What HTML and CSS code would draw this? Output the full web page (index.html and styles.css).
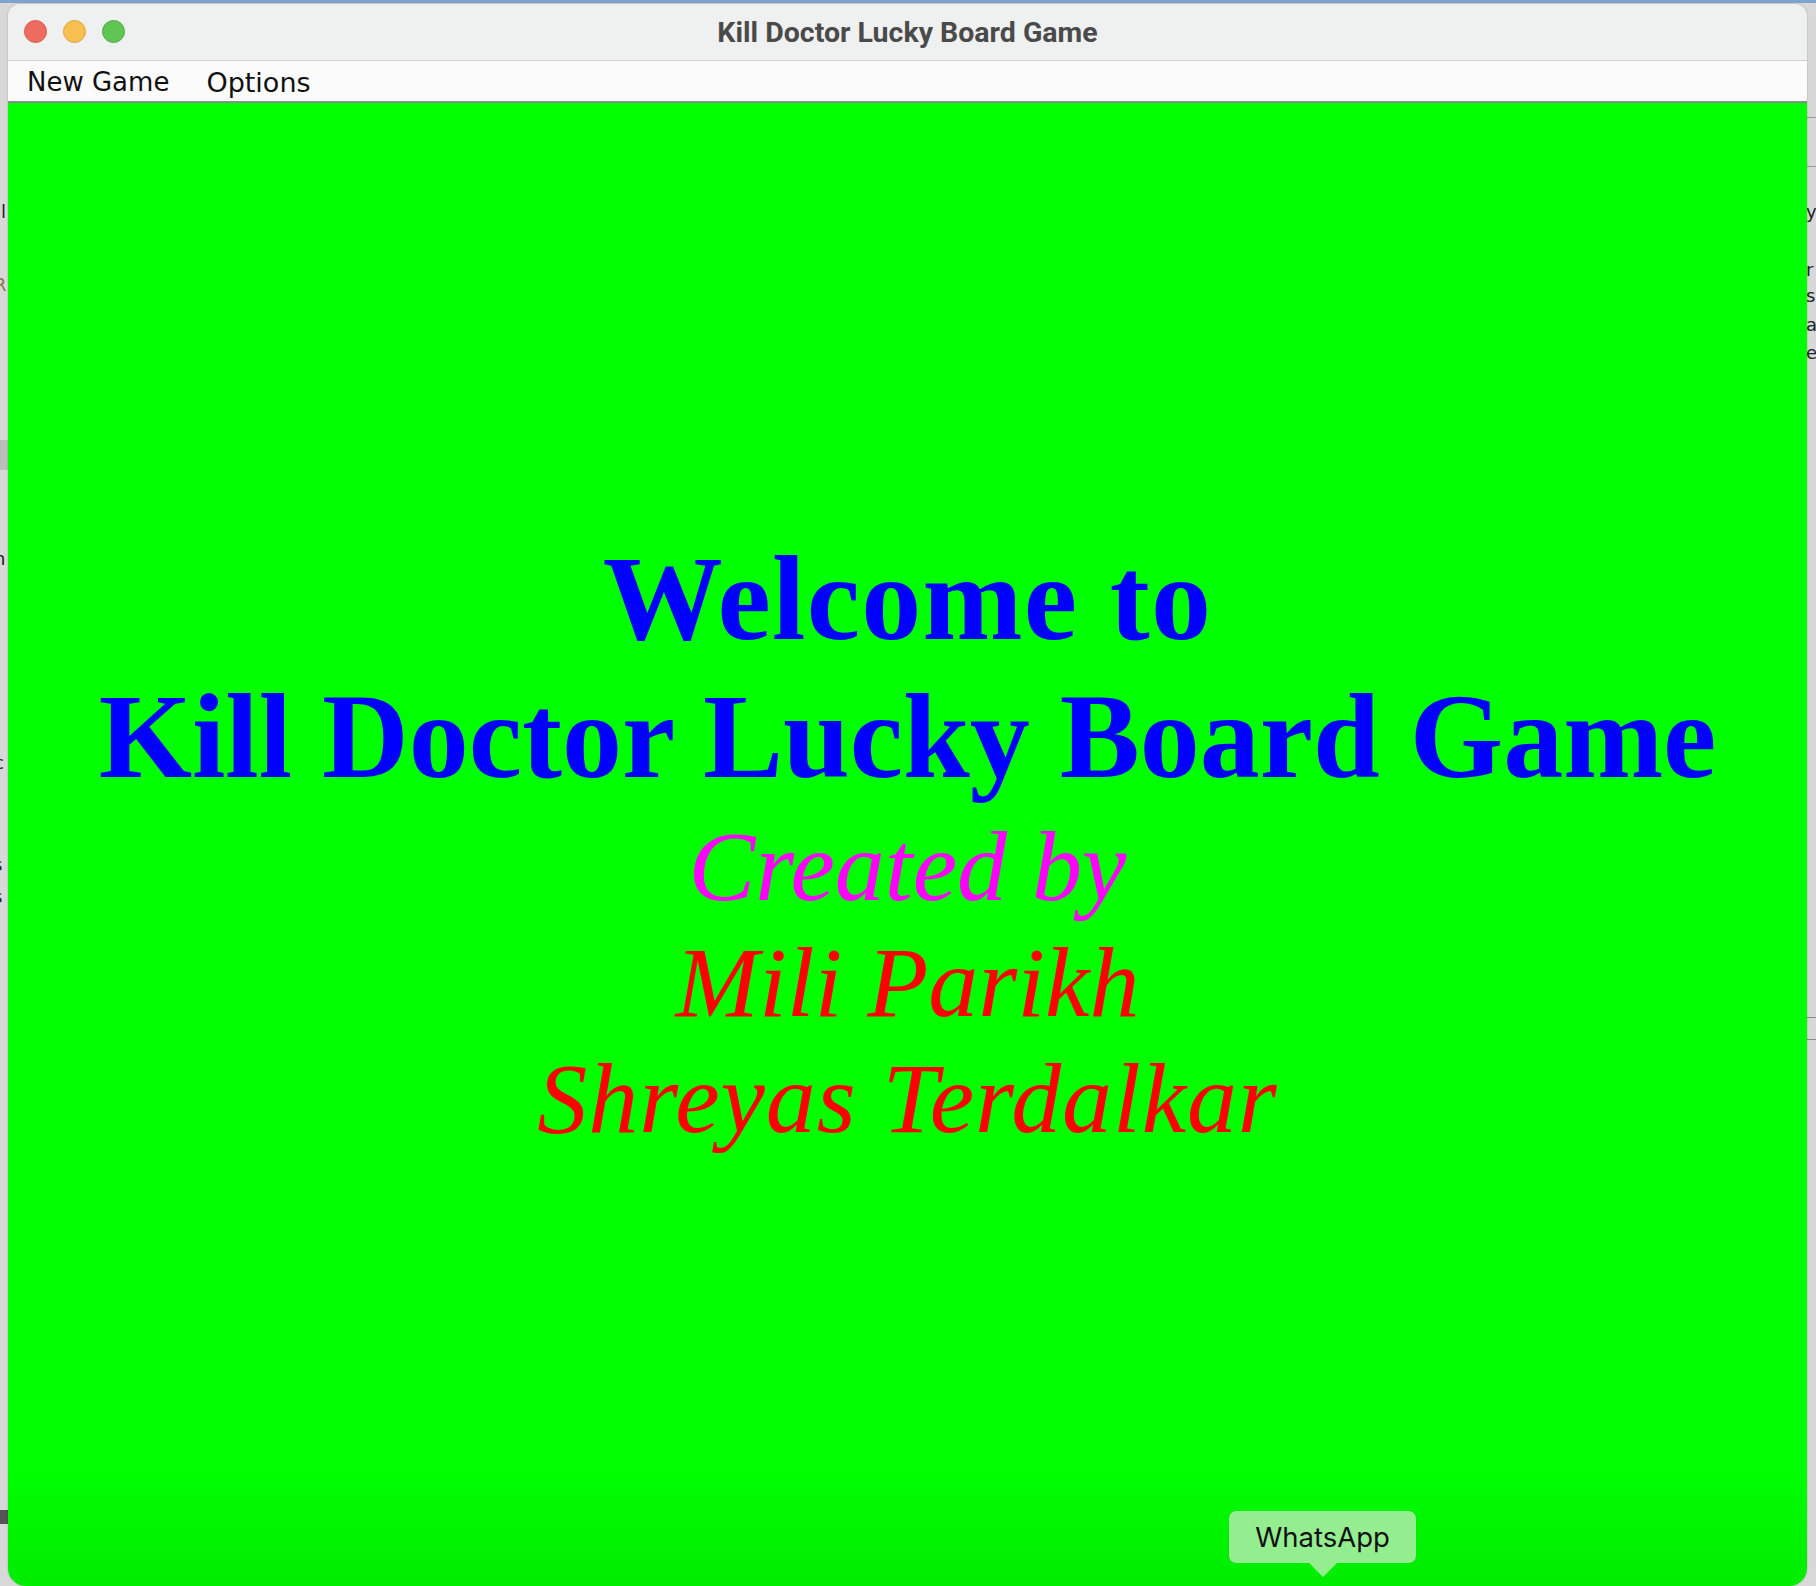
FILE: index.html
```html
<!DOCTYPE html>
<html>
<head>
<meta charset="utf-8">
<title>Kill Doctor Lucky Board Game</title>
<link rel="stylesheet" href="styles.css">
</head>
<body>
<div class="desktop">
  <div class="topstrip"></div>
  <div class="gutter gutter-left">
    <span class="g g1">il</span>
    <span class="g g2">R</span>
    <span class="gblock"></span>
    <span class="g g3">n</span>
    <span class="g g4">c</span>
    <span class="g g5">s</span>
    <span class="g g6">s</span>
    <span class="gbar"></span>
  </div>
  <div class="gutter gutter-right">
    <span class="rline rl1"></span>
    <span class="rline rl2"></span>
    <span class="g r1">y</span>
    <span class="g r2">r</span>
    <span class="g r3">s</span>
    <span class="g r4">a</span>
    <span class="g r5">e</span>
    <span class="rline rl3"></span>
    <span class="rline rl4"></span>
  </div>

  <div class="window">
    <div class="titlebar">
      <div class="lights">
        <span class="light red"></span>
        <span class="light yellow"></span>
        <span class="light green"></span>
      </div>
      <div class="title">Kill Doctor Lucky Board Game</div>
    </div>
    <div class="menubar">
      <span class="menu-item">New Game</span>
      <span class="menu-item">Options</span>
    </div>
    <div class="content">
      <div class="big welcome">Welcome to</div>
      <div class="big">Kill Doctor Lucky Board Game</div>
      <div class="small magenta first">Created by</div>
      <div class="small red-text">Mili Parikh</div>
      <div class="small red-text wide">Shreyas Terdalkar</div>
    </div>
    <div class="tooltip">WhatsApp<span class="arrow"></span></div>
  </div>
</div>
</body>
</html>
```
FILE: styles.css
```css
html, body {
  margin: 0;
  padding: 0;
}
body {
  width: 1816px;
  height: 1586px;
  overflow: hidden;
  background: #d6d6d6;
  font-family: "DejaVu Sans", sans-serif;
}
.desktop {
  position: relative;
  width: 1816px;
  height: 1586px;
  background: #d8d8d8;
}
.topstrip {
  position: absolute;
  left: 0;
  top: 0;
  width: 1816px;
  height: 3px;
  background: #7fa3cf;
}
.gutter {
  position: absolute;
  top: 3px;
  height: 1583px;
  width: 10px;
  overflow: hidden;
  font-family: "DejaVu Sans", sans-serif;
  font-size: 18px;
  color: #222;
}
.gutter-left { left: 0; }
.gutter-right { right: 0; width: 10px; }
.g { position: absolute; line-height: 1; }
.g1 { left: -4px; top: 200px; }
.g2 { left: -6px; top: 273px; color: #8a7550; }
.g3 { left: -6px; top: 547px; }
.g4 { left: -6px; top: 751px; }
.g5 { left: -7px; top: 853px; }
.g6 { left: -7px; top: 885px; }
.gblock { position: absolute; left: 0; top: 437px; width: 8px; height: 30px; background: #bdbdbd; }
.gbar { position: absolute; left: 0; top: 1507px; width: 8px; height: 14px; background: #555; }
.r1 { left: 0; top: 200px; }
.r2 { left: 0; top: 258px; }
.r3 { left: 0; top: 284px; }
.r4 { left: 0; top: 313px; }
.r5 { left: 0; top: 341px; }
.rline { position: absolute; left: 0; width: 10px; height: 1px; background: #999; }
.rl1 { top: 114px; }
.rl2 { top: 163px; }
.rl3 { top: 1014px; background: #888; }
.rl4 { top: 1036px; background: #888; }

.window {
  position: absolute;
  left: 8px;
  top: 4px;
  width: 1799px;
  height: 1582px;
  border-radius: 12px 12px 18px 18px;
  overflow: hidden;
  display: flex;
  flex-direction: column;
  box-shadow: 0 0 2px rgba(0,0,0,0.25);
}
.titlebar {
  position: relative;
  height: 56px;
  flex: none;
  background: #eff0f0;
  border-bottom: 1px solid #d2d2d2;
  display: flex;
  align-items: center;
  justify-content: center;
}
.lights {
  position: absolute;
  left: 16px;
  top: 16px;
  display: flex;
  gap: 16px;
}
.light {
  width: 23px;
  height: 23px;
  border-radius: 50%;
  box-sizing: border-box;
}
.light.red { background: #ee6b5f; border: 1px solid #d85a4f; }
.light.yellow { background: #f6bf4f; border: 1px solid #dca63c; }
.light.green { background: #61c554; border: 1px solid #50ab44; }
.title {
  font-family: Roboto, "Liberation Sans", sans-serif;
  font-weight: 700;
  font-size: 28.5px;
  color: #4a4a4a;
  margin-top: 0;
}
.menubar {
  height: 40px;
  flex: none;
  background: #fbfbfb;
  border-bottom: 2px solid #8c8c8c;
  display: flex;
  align-items: center;
  padding-left: 19px;
  gap: 37px;
}
.menu-item {
  font-family: "DejaVu Sans", sans-serif;
  font-size: 26px;
  color: #111;
  line-height: 1;
  margin-top: 2px;
}
.menu-item + .menu-item {
  font-size: 27px;
}
.content {
  flex: 1;
  background: linear-gradient(to bottom, #00ff00 0, #00ff00 92%, #00ec00 100%);
  padding-top: 427px;
  text-align: center;
  font-family: "Liberation Serif", "Times New Roman", serif;
}
.big {
  font-size: 120px;
  font-weight: 700;
  line-height: 138px;
  color: #0000ff;
  white-space: nowrap;
}
.big.welcome {
  letter-spacing: 1.3px;
}
.small {
  font-size: 100px;
  font-style: italic;
  line-height: 116px;
  white-space: nowrap;
}
.small.first { margin-top: 3px; }
.small.wide { letter-spacing: 0.9px; }
.magenta { color: #ff00ff; }
.red-text { color: #ff0000; }

.tooltip {
  position: absolute;
  left: 1221px;
  top: 1507px;
  width: 187px;
  height: 52px;
  box-sizing: border-box;
  background: #94ee8f;
  border-radius: 7px;
  box-shadow: 0 0 1px rgba(0,0,0,0.25);
  display: flex;
  align-items: center;
  justify-content: center;
  font-family: Inter, Roboto, sans-serif;
  font-size: 27.5px;
  color: #111;
}
.arrow {
  position: absolute;
  left: 80px;
  top: 52px;
  width: 0;
  height: 0;
  border-left: 14px solid transparent;
  border-right: 14px solid transparent;
  border-top: 14px solid #94ee8f;
}
```
